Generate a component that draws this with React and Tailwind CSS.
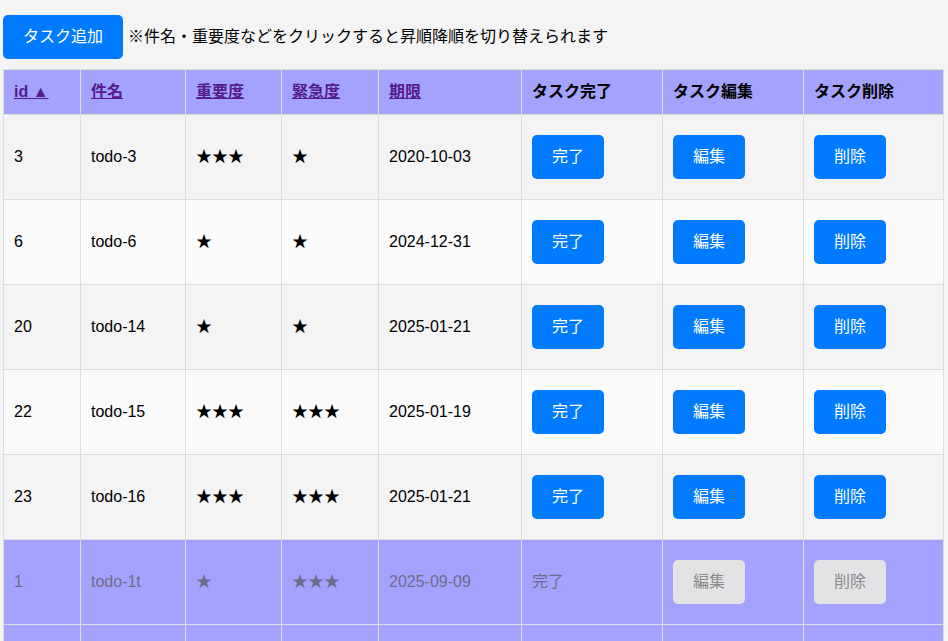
import React from "react";

const rows = [
  { id: 3, name: "todo-3", imp: "★★★", urg: "★", due: "2020-10-03" },
  { id: 6, name: "todo-6", imp: "★", urg: "★", due: "2024-12-31" },
  { id: 20, name: "todo-14", imp: "★", urg: "★", due: "2025-01-21" },
  { id: 22, name: "todo-15", imp: "★★★", urg: "★★★", due: "2025-01-19" },
  { id: 23, name: "todo-16", imp: "★★★", urg: "★★★", due: "2025-01-21" },
];

const done = [
  { id: 1, name: "todo-1t", imp: "★", urg: "★★★", due: "2025-09-09" },
  { id: 2, name: "todo-2", imp: "★★", urg: "★", due: "2025-09-10" },
];

const font = { fontFamily: '"Liberation Sans", "Noto Sans CJK JP", sans-serif' };

function Btn({ children, disabled }) {
  return disabled ? (
    <button className="rounded-[5px] bg-[#e3e3e5] px-5 py-[10px] text-[16px] leading-6 text-[#8a8a8a]">
      {children}
    </button>
  ) : (
    <button className="rounded-[5px] bg-[#007bff] px-5 py-[10px] text-[16px] leading-6 text-white">
      {children}
    </button>
  );
}

const th = "border border-[#dddddd] px-[10px] py-[10px] text-left font-bold leading-6";
const td = "border border-[#dddddd] px-[10px] py-5 leading-6 align-middle";

export default function App() {
  return (
    <div className="min-h-screen bg-[#f4f4f4] pl-[3px] pt-[15px] text-[16px] text-black" style={font}>
      <div className="flex items-center gap-[5px]">
        <button className="rounded-[5px] bg-[#007bff] px-5 py-[10px] leading-6 text-white">タスク追加</button>
        <span className="leading-6">※件名・重要度などをクリックすると昇順降順を切り替えられます</span>
      </div>
      <table className="mt-[10px] w-[940px] table-fixed border-collapse">
        <colgroup>
          <col className="w-[77px]" />
          <col className="w-[105px]" />
          <col className="w-[96px]" />
          <col className="w-[97px]" />
          <col className="w-[143px]" />
          <col className="w-[141px]" />
          <col className="w-[141px]" />
          <col className="w-[140px]" />
        </colgroup>
        <thead>
          <tr className="bg-[#a3a3fe]">
            <th className={th}><a className="text-[#551a8b] underline">id ▲</a></th>
            <th className={th}><a className="text-[#551a8b] underline">件名</a></th>
            <th className={th}><a className="text-[#551a8b] underline">重要度</a></th>
            <th className={th}><a className="text-[#551a8b] underline">緊急度</a></th>
            <th className={th}><a className="text-[#551a8b] underline">期限</a></th>
            <th className={th}>タスク完了</th>
            <th className={th}>タスク編集</th>
            <th className={th}>タスク削除</th>
          </tr>
        </thead>
        <tbody>
          {rows.map((r, i) => (
            <tr key={r.id} className={i % 2 === 0 ? "bg-[#f4f4f4]" : "bg-[#fafafa]"}>
              <td className={td}>{r.id}</td>
              <td className={td}>{r.name}</td>
              <td className={td}>{r.imp}</td>
              <td className={td}>{r.urg}</td>
              <td className={td}>{r.due}</td>
              <td className={td}><Btn>完了</Btn></td>
              <td className={td}><Btn>編集</Btn></td>
              <td className={td}><Btn>削除</Btn></td>
            </tr>
          ))}
          {done.map((r) => (
            <tr key={r.id} className="bg-[#a3a3fe] text-[#6c6c8a]">
              <td className={td}>{r.id}</td>
              <td className={td}>{r.name}</td>
              <td className={td}>{r.imp}</td>
              <td className={td}>{r.urg}</td>
              <td className={td}>{r.due}</td>
              <td className={td}>完了</td>
              <td className={td}><Btn disabled>編集</Btn></td>
              <td className={td}><Btn disabled>削除</Btn></td>
            </tr>
          ))}
        </tbody>
      </table>
    </div>
  );
}
